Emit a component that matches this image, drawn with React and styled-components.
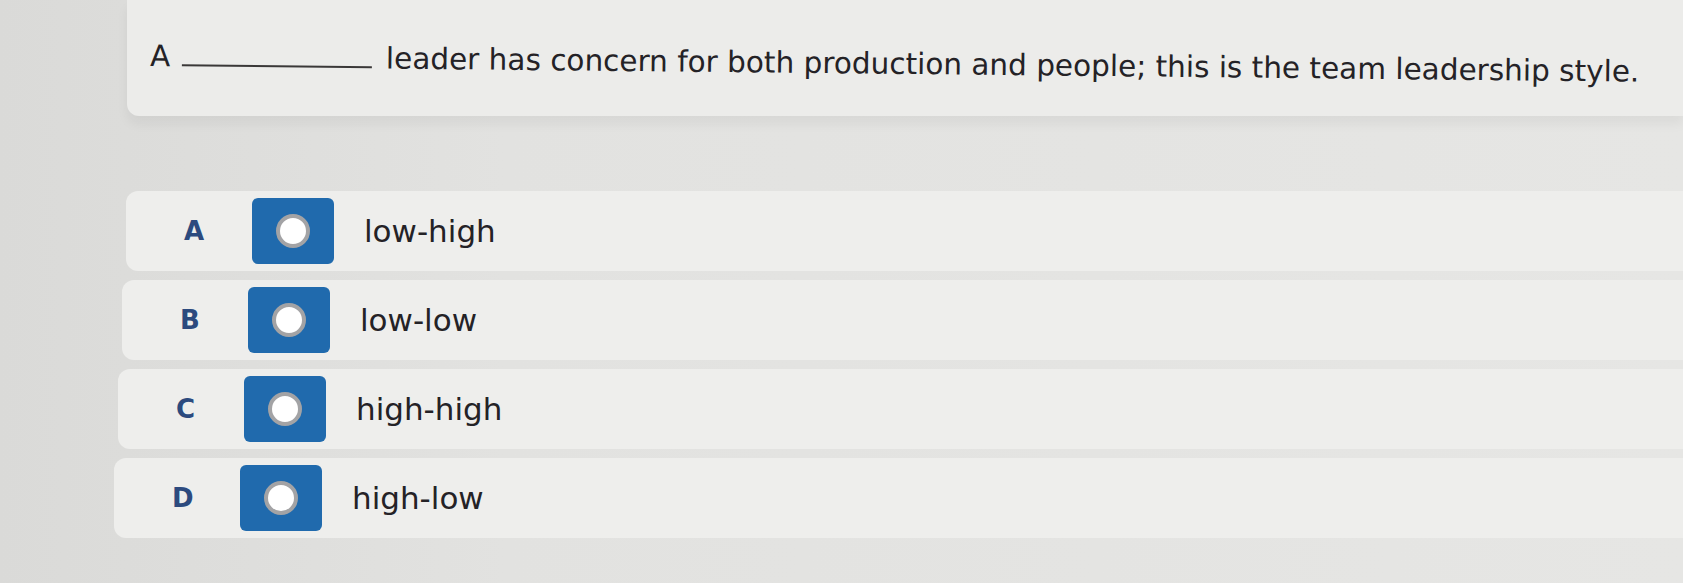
import styled, { createGlobalStyle } from "styled-components";

const GlobalStyle = createGlobalStyle`
  html, body {
    margin: 0;
    padding: 0;
    background: #e2e2e0;
  }
  * {
    box-sizing: border-box;
  }
`;

// shift mimics the slight perspective of the photographed screen
const options = [
  { letter: "A", text: "low-high", shift: 8 },
  { letter: "B", text: "low-low", shift: 4 },
  { letter: "C", text: "high-high", shift: 0 },
  { letter: "D", text: "high-low", shift: -4 },
];

const App = () => {
  return (
    <Page>
      <GlobalStyle />
      <QuestionCard>
        <QuestionText>
          A <Blank /> leader has concern for both production and people; this
          is the team leadership style.
        </QuestionText>
      </QuestionCard>
      <OptionList>
        {options.map((o) => (
          <OptionRow key={o.letter} $shift={o.shift}>
            <Letter>{o.letter}</Letter>
            <RadioBox>
              <RadioDot />
            </RadioBox>
            <Label>{o.text}</Label>
          </OptionRow>
        ))}
      </OptionList>
    </Page>
  );
};

const Page = styled.div`
  width: 1683px;
  height: 583px;
  overflow: hidden;
  background: linear-gradient(to right, #dadad8 0%, #e2e2e0 30%, #e6e6e4 100%);
  display: flex;
  flex-direction: column;
  font-family: "DejaVu Sans", "Liberation Sans", sans-serif;
`;

const QuestionCard = styled.div`
  margin-left: 127px;
  height: 116px;
  background: #ececea;
  border-bottom-left-radius: 12px;
  box-shadow: 0 8px 12px rgba(0, 0, 0, 0.05);
  display: flex;
  align-items: flex-start;
  padding: 38px 0 0 23px;
`;

const QuestionText = styled.p`
  margin: 0;
  font-size: 29.5px;
  line-height: 36px;
  color: #242226;
  white-space: nowrap;
  transform: rotate(0.6deg);
  transform-origin: left center;
`;

const Blank = styled.span`
  display: inline-block;
  width: 190px;
  border-bottom: 2px solid #3a3838;
  margin: 0 5px 0 2px;
`;

const OptionList = styled.div`
  margin-top: 75px;
  margin-left: 118px;
  display: flex;
  flex-direction: column;
  gap: 9px;
`;

const OptionRow = styled.div`
  height: 80px;
  margin-left: ${(p) => p.$shift}px;
  background: #eeeeec;
  border-radius: 12px 0 0 12px;
  display: flex;
  align-items: center;
  padding-left: 58px;
`;

const Letter = styled.span`
  width: 68px;
  font-family: "DejaVu Sans", sans-serif;
  font-weight: bold;
  font-size: 26px;
  color: #2c4a7e;
`;

const RadioBox = styled.div`
  width: 82px;
  height: 66px;
  border-radius: 6px;
  background: #206aad;
  display: flex;
  align-items: center;
  justify-content: center;
`;

const RadioDot = styled.div`
  width: 34px;
  height: 34px;
  border-radius: 50%;
  background: #ffffff;
  border: 4px solid #a3a3a5;
`;

const Label = styled.span`
  margin-left: 30px;
  font-size: 31px;
  color: #242226;
`;

export default App;
